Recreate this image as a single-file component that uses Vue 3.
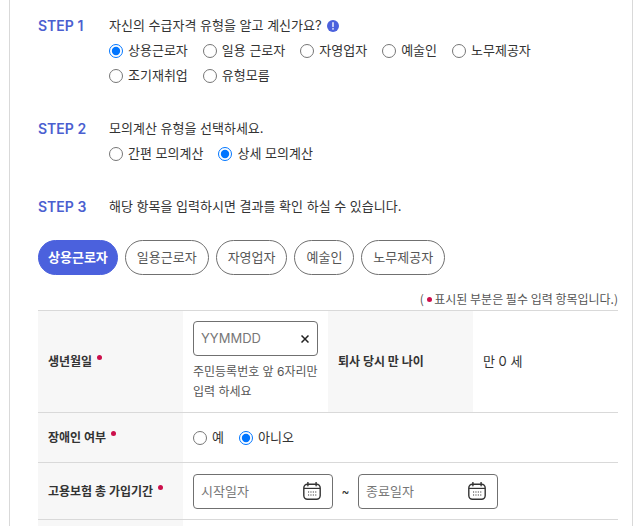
<script setup>
import { ref } from "vue";

const steps = ref([
    {
        id: "worker",
        label: "STEP 1",
        title: "자신의 수급자격 유형을 알고 계신가요?",
        info: true,
        selected: "상용근로자",
        options: ["상용근로자", "일용 근로자", "자영업자", "예술인", "노무제공자", "조기재취업", "유형모름"],
    },
    {
        id: "mode",
        label: "STEP 2",
        title: "모의계산 유형을 선택하세요.",
        selected: "상세 모의계산",
        options: ["간편 모의계산", "상세 모의계산"],
    },
    {
        id: "result",
        label: "STEP 3",
        title: "해당 항목을 입력하시면 결과를 확인 하실 수 있습니다.",
        selected: "",
        options: [],
    },
]);

const tabs = ["상용근로자", "일용근로자", "자영업자", "예술인", "노무제공자"];
const activeTab = ref("상용근로자");

const birth = ref("");
const disabled = ref("아니오");
const period = ref([
    { id: "start", label: "시작일자", value: "" },
    { id: "end", label: "종료일자", value: "" },
]);
</script>

<template>
    <main class="calculator">
        <section class="steps">
            <div class="step" v-for="step in steps" :key="step.id">
                <strong class="step-label">{{ step.label }}</strong>
                <div class="step-body" role="group" :aria-label="step.title">
                    <p class="step-title">
                        {{ step.title }}
                        <button v-if="step.info" class="info" type="button" aria-label="도움말">
                            <svg viewBox="0 0 12 12" width="12" height="12">
                                <circle cx="6" cy="6" r="6" fill="#4b61dd" />
                                <path d="M6 2.8v3.8" stroke="#fff" stroke-width="1.4" stroke-linecap="round" />
                                <circle cx="6" cy="8.9" r="0.8" fill="#fff" />
                            </svg>
                        </button>
                    </p>
                    <div class="radios" v-if="step.options.length">
                        <label v-for="option in step.options" :key="option">
                            <input type="radio" :name="step.id" :value="option" v-model="step.selected">
                            {{ option }}
                        </label>
                    </div>
                </div>
            </div>
        </section>

        <nav class="tabs">
            <button
                v-for="tab in tabs"
                :key="tab"
                type="button"
                :class="{ active: tab === activeTab }"
                @click="activeTab = tab"
            >{{ tab }}</button>
        </nav>

        <p class="note">( <i class="dot"></i> 표시된 부분은 필수 입력 항목입니다.)</p>

        <table>
            <tbody>
                <tr class="row-birth">
                    <th scope="row"><label for="birth">생년월일</label><i class="dot required"></i></th>
                    <td>
                        <div class="field">
                            <input id="birth" type="text" placeholder="YYMMDD" v-model="birth">
                            <button type="button" aria-label="지우기" @click="birth = ''">
                                <svg viewBox="0 0 8 8" width="8" height="8">
                                    <path d="M0.5 0.5L7.5 7.5M7.5 0.5L0.5 7.5" stroke="#222" stroke-width="1.5" />
                                </svg>
                            </button>
                        </div>
                        <p class="help">주민등록번호 앞 6자리만 입력 하세요</p>
                    </td>
                    <th scope="row">퇴사 당시 만 나이</th>
                    <td>만 0 세</td>
                </tr>
                <tr class="row-disabled">
                    <th scope="row">장애인 여부<i class="dot required"></i></th>
                    <td colspan="3">
                        <div class="radios">
                            <label v-for="option in ['예', '아니오']" :key="option">
                                <input type="radio" name="disabled" :value="option" v-model="disabled">
                                {{ option }}
                            </label>
                        </div>
                    </td>
                </tr>
                <tr class="row-period">
                    <th scope="row">고용보험 총 가입기간<i class="dot required"></i></th>
                    <td colspan="3">
                        <div class="period">
                            <template v-for="(date, index) in period" :key="date.id">
                                <span v-if="index > 0" class="tilde">~</span>
                                <div class="field date">
                                    <input type="text" :aria-label="date.label" :placeholder="date.label" v-model="date.value">
                                    <button type="button" :aria-label="`${date.label} 선택`">
                                        <svg viewBox="0 0 18 18" width="18" height="18" fill="none" stroke="#333">
                                            <rect x="0.8" y="2.3" width="16.4" height="14.9" rx="3.6" stroke-width="1.4" />
                                            <path d="M1 6.4h16" stroke-width="1.2" />
                                            <path d="M4.9 0.4v3.4M13.1 0.4v3.4" stroke-width="1.4" stroke-linecap="round" />
                                            <path d="M5 10h9M5 13h9" stroke-width="1.1" stroke-dasharray="1.1 1.3" />
                                        </svg>
                                    </button>
                                </div>
                            </template>
                        </div>
                    </td>
                </tr>
                <tr class="row-period">
                    <th></th>
                    <td colspan="3"></td>
                </tr>
            </tbody>
        </table>
    </main>
</template>

<style>
html {
    overflow: hidden;
}

body {
    margin: 0;
    background: #fff;
}
</style>

<style scoped>
.calculator {
    box-sizing: border-box;
    min-height: 100vh;
    margin: 0 8px 0 9px;
    padding: 13px 14px 0 28px;
    border: solid #d9d9d9;
    border-width: 0 1px;
    font-family: Inter, "Noto Sans CJK KR", sans-serif;
    font-size: 13px;
    line-height: 25px;
    color: #333;
}

p {
    margin: 0;
}

button,
input {
    font: inherit;
    color: inherit;
}

button {
    padding: 0;
    border: 0;
    background: none;
    cursor: pointer;
}

svg {
    display: block;
}

.steps {
    display: flex;
    flex-direction: column;
    gap: 28px;
}

.step {
    display: flex;
}

.step-label {
    flex: 0 0 71px;
    font-size: 14px;
    font-weight: 600;
    color: #4b5fd0;
}

.step-body {
    flex: 1;
}

.step-title {
    display: flex;
    align-items: center;
    gap: 5px;
}

.radios {
    display: flex;
    flex-wrap: wrap;
    column-gap: 15px;
}

.radios label {
    display: flex;
    align-items: center;
    gap: 5px;
}

.radios input {
    width: 14px;
    height: 14px;
    margin: 0;
}

.tabs {
    display: flex;
    gap: 7px;
    margin-top: 21px;
}

.tabs button {
    height: 35px;
    padding: 0 11px;
    border: 1px solid #707070;
    border-radius: 18px;
    color: #555;
}

.tabs .active {
    padding: 0 9px;
    border-color: #4b61dd;
    background: #4b61dd;
    color: #fff;
    font-weight: 700;
}

.note {
    margin-top: 12px;
    font-family: "Noto Sans CJK KR", sans-serif;
    font-size: 12px;
    line-height: 23px;
    text-align: right;
    color: #555;
}

.dot {
    display: inline-block;
    width: 5px;
    height: 5px;
    border-radius: 50%;
    background: #cc0f4b;
    vertical-align: 2px;
}

.required {
    margin-left: 5px;
    vertical-align: 6px;
}

table {
    width: 100%;
    table-layout: fixed;
    border-spacing: 0;
    border-top: 1px solid #d9d9d9;
}

th,
td {
    box-sizing: border-box;
    padding: 0 10px;
    border-bottom: 1px solid #d9d9d9;
    text-align: left;
}

th {
    background: #f7f7f7;
    font-size: 12px;
    font-weight: 700;
}

.row-birth {
    height: 102px;
}

.row-disabled {
    height: 50px;
}

.row-period {
    height: 57px;
}

.field {
    display: flex;
    align-items: center;
    box-sizing: border-box;
    height: 35px;
    padding: 0 8px 0 7px;
    border: 1px solid #707070;
    border-radius: 4px;
}

.field input {
    flex: 1;
    min-width: 0;
    padding: 0;
    border: 0;
    outline: 0;
    background: none;
}

.field input::placeholder {
    color: #777;
}

.date {
    width: 140px;
    padding-right: 11px;
}

.help {
    margin-top: 6px;
    font-size: 12px;
    line-height: 20px;
    color: #555;
}

.period {
    display: flex;
    align-items: center;
}

.tilde {
    width: 25px;
    font-size: 12px;
    text-align: center;
}
</style>
